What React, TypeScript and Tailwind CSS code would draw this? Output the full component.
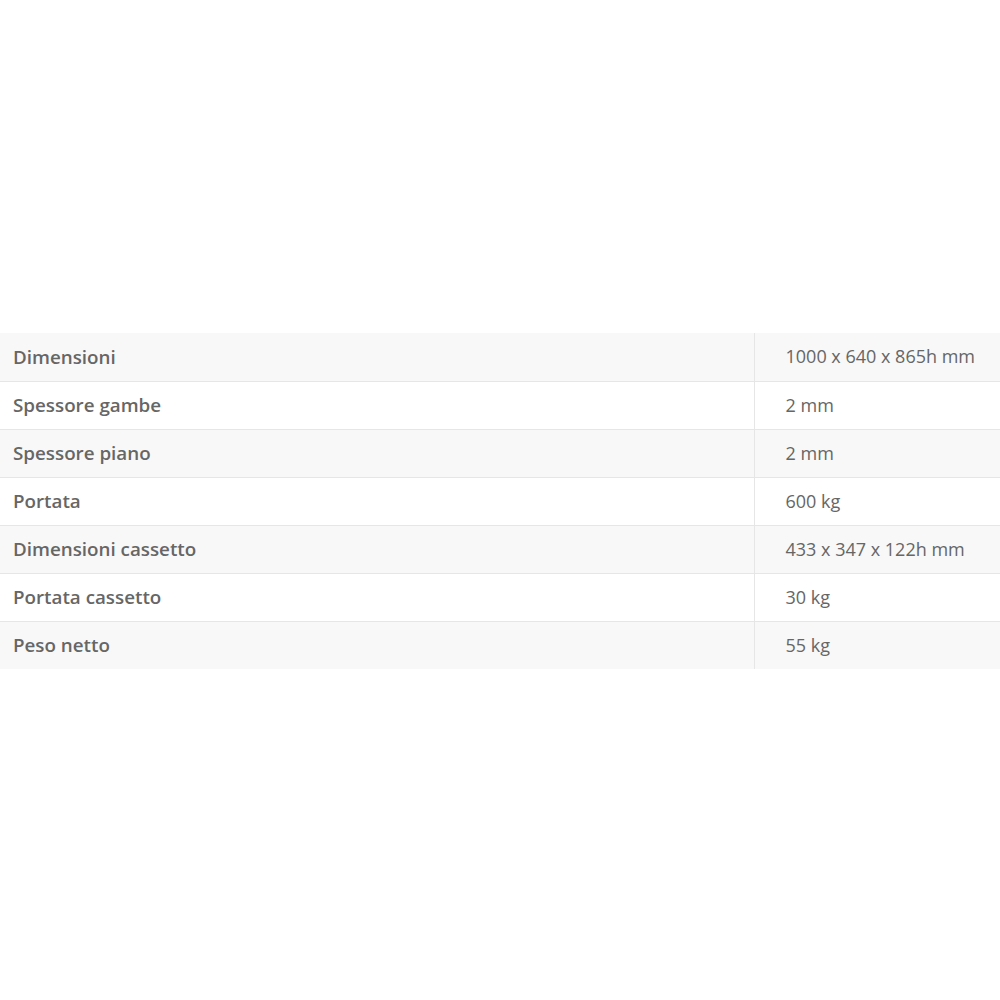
const rows: [string, string][] = [
  ['Dimensioni', '1000 x 640 x 865h mm'],
  ['Spessore gambe', '2 mm'],
  ['Spessore piano', '2 mm'],
  ['Portata', '600 kg'],
  ['Dimensioni cassetto', '433 x 347 x 122h mm'],
  ['Portata cassetto', '30 kg'],
  ['Peso netto', '55 kg'],
];

const App = () => {
  return (
    <div className="min-h-screen bg-white pt-[333px] font-['Open_Sans',sans-serif] text-[#666]">
      <table className="w-full border-collapse">
        <tbody>
          {rows.map(([label, value], i) => (
            <tr
              key={label}
              className={`h-[48px] ${i % 2 === 0 ? 'bg-[#f8f8f8]' : 'bg-white'} ${i > 0 ? 'border-t border-[#e6e6e6]' : ''}`}
            >
              <td className="w-[754px] pl-[13px] text-[18.8px] font-semibold">{label}</td>
              <td className="border-l border-[#e6e6e6] pl-[31px] text-[18px]">{value}</td>
            </tr>
          ))}
        </tbody>
      </table>
    </div>
  );
};

export default App;
